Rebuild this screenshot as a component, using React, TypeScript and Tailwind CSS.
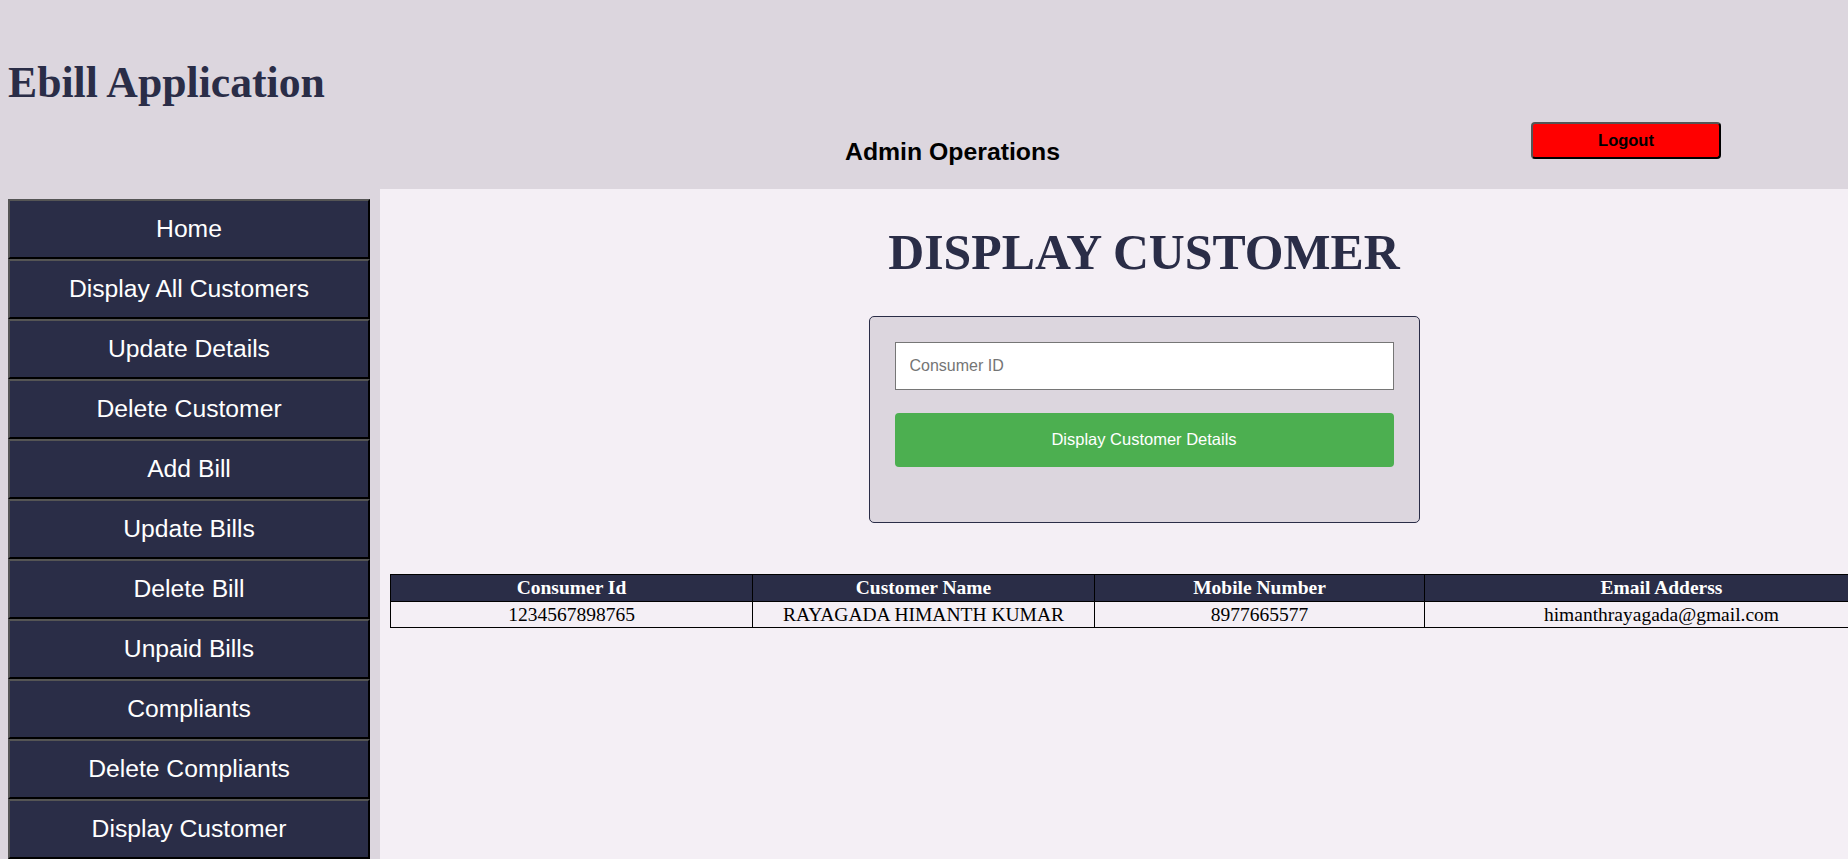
import React from 'react';

const menuItems = [
    'Home',
    'Display All Customers',
    'Update Details',
    'Delete Customer',
    'Add Bill',
    'Update Bills',
    'Delete Bill',
    'Unpaid Bills',
    'Compliants',
    'Delete Compliants',
    'Display Customer',
];

const serif = "font-['Liberation_Serif','Times_New_Roman',serif]";
const sans = "font-['Liberation_Sans',Arial,sans-serif]";

export default function App() {
    return (
        <div className="w-screen h-screen overflow-hidden bg-[#f4eff5]">
            {/* Header */}
            <header className="h-[189px] bg-[#dcd6de]">
                <h1 className={`${serif} pt-[61px] pl-2 text-[43.7px] leading-none font-bold text-[#2a2d47]`}>
                    Ebill Application
                </h1>
                <div className="flex items-start mt-[17px] pl-[845px] pr-[127px]">
                    <h2 className={`${sans} mt-[18px] text-[24.8px] leading-none font-bold text-black`}>
                        Admin Operations
                    </h2>
                    <button
                        className={`${sans} ml-auto w-[190px] h-[37px] bg-[#ff0000] rounded-[4px] border-2 border-t-[#555] border-l-[#555] border-b-black border-r-black text-[16.5px] font-bold text-black`}
                    >
                        Logout
                    </button>
                </div>
            </header>

            <div className="flex">
                {/* Sidebar */}
                <aside className="w-[380px] shrink-0 bg-[#dcd6de] pt-[10px] pl-2 h-[700px]">
                    {menuItems.map((item) => (
                        <button
                            key={item}
                            className={`${sans} w-[362px] h-[60px] flex items-center justify-center bg-[#2a2d47] text-white text-[24.7px] border-2 border-t-[#555] border-l-[#555] border-b-black border-r-black`}
                        >
                            {item}
                        </button>
                    ))}
                </aside>

                {/* Main */}
                <main className="w-[1528px] shrink-0 px-[10px]">
                    <h1 className={`${serif} mt-[39px] text-center text-[49.8px] leading-none font-bold text-[#2a2d47]`}>
                        DISPLAY CUSTOMER
                    </h1>

                    <div className="w-[551px] mx-auto mt-[38px] bg-[#dcd6de] border border-[#2a2d47] rounded-[5px] px-[25px] pt-[25px] pb-[55px]">
                        <input
                            type="text"
                            placeholder="Consumer ID"
                            className={`${sans} block w-full h-[48px] bg-white border border-[#767676] px-[14px] text-[16px] text-black placeholder:text-[#757575] outline-none`}
                        />
                        <button className={`${sans} mt-[23px] w-full h-[54px] bg-[#4caf50] rounded-[4px] text-white text-[16.5px]`}>
                            Display Customer Details
                        </button>
                    </div>

                    <table className={`${serif} mt-[51px] w-[1508px] table-fixed border-collapse border border-black text-[19.5px]`}>
                        <colgroup>
                            <col className="w-[362px]" />
                            <col className="w-[342px]" />
                            <col className="w-[330px]" />
                            <col className="w-[474px]" />
                        </colgroup>
                        <thead>
                            <tr className="bg-[#2a2d47] text-white">
                                <th className="h-[27px] p-0 leading-none border border-black font-bold">Consumer Id</th>
                                <th className="h-[27px] p-0 leading-none border border-black font-bold">Customer Name</th>
                                <th className="h-[27px] p-0 leading-none border border-black font-bold">Mobile Number</th>
                                <th className="h-[27px] p-0 leading-none border border-black font-bold">Email Adderss</th>
                            </tr>
                        </thead>
                        <tbody>
                            <tr className="text-black">
                                <td className="h-[26px] p-0 leading-none text-center border border-black">1234567898765</td>
                                <td className="h-[26px] p-0 leading-none text-center border border-black">RAYAGADA HIMANTH KUMAR</td>
                                <td className="h-[26px] p-0 leading-none text-center border border-black">8977665577</td>
                                <td className="h-[26px] p-0 leading-none text-center border border-black">himanthrayagada@gmail.com</td>
                            </tr>
                        </tbody>
                    </table>
                </main>
            </div>
        </div>
    );
}
